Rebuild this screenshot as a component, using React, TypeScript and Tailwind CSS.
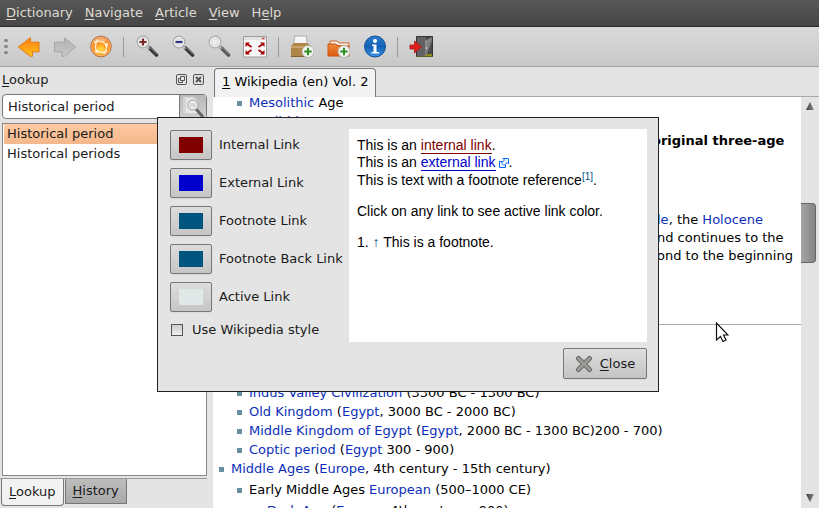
import React from "react";

type Children = { children: React.ReactNode };

const Key = ({ children }: Children) => (
  <span className="underline decoration-1 underline-offset-2">{children}</span>
);

const MenuItem = ({ children }: Children) => (
  <button type="button" className="whitespace-nowrap text-[#dfdbd2]">
    {children}
  </button>
);

const ToolButton = ({ label, children }: Children & { label: string }) => (
  <button type="button" aria-label={label} className="flex h-6 w-6 shrink-0 items-center justify-center">
    <svg width="24" height="24" viewBox="0 0 24 24">
      {children}
    </svg>
  </button>
);

const ToolSeparator = () => (
  <div className="-mx-px h-5 w-px shrink-0 bg-[#9a9a9a]" />
);

const Lens = ({ handle = "#333", children }: { handle?: string; children?: React.ReactNode }) => (
  <>
    <path d="M14.500 13l7 7" stroke={handle} strokeWidth="3.6" strokeLinecap="round" />
    <path d="M15.500 12.800l6.500 6.500" stroke="#8c8c8c" strokeWidth="1" />
    <path d="M12 11l2.600 2.600" stroke="#b4b4b4" strokeWidth="2" />
    <circle cx="8" cy="7" r="5.800" fill="url(#glass)" stroke="#a8a8a6" strokeWidth="1.200" />
    <circle cx="8" cy="7" r="4.700" fill="none" stroke="#f4f4f4" strokeWidth="1" />
    {children}
  </>
);

const PlusBadge = ({ x }: { x: number }) => (
  <g>
    <circle cx={x} cy="16.5" r="6" fill="#f2f2ef" stroke="#aaa9a0" strokeWidth="0.8" />
    <path d={`M${x} 12.8v7.4M${x - 3.7} 16.5h7.4`} stroke="#2b8f20" strokeWidth="2" />
  </g>
);

const Gradients = () => (
  <svg width="0" height="0" className="absolute" aria-hidden="true">
    <defs>
      <linearGradient id="orange" x1="0" y1="0" x2="0" y2="1">
        <stop offset="0" stopColor="#ff7a14" />
        <stop offset="1" stopColor="#ffc21a" />
      </linearGradient>
      <linearGradient id="grey" x1="0" y1="0" x2="0" y2="1">
        <stop offset="0" stopColor="#b2b2b2" />
        <stop offset="1" stopColor="#c8c8c8" />
      </linearGradient>
      <radialGradient id="globe" cx="0.5" cy="0.65" r="0.6">
        <stop offset="0" stopColor="#ffe04a" />
        <stop offset="0.5" stopColor="#ff9a1e" />
        <stop offset="1" stopColor="#f27a2c" />
      </radialGradient>
      <radialGradient id="glass">
        <stop offset="0" stopColor="#f4f4f4" />
        <stop offset="1" stopColor="#d2d4d2" />
      </radialGradient>
      <linearGradient id="blue" x1="0" y1="0" x2="0" y2="1">
        <stop offset="0" stopColor="#2d7fd0" />
        <stop offset="0.5" stopColor="#1260b4" />
        <stop offset="1" stopColor="#3c94e4" />
      </linearGradient>
      <linearGradient id="folder" x1="0" y1="0" x2="0" y2="1">
        <stop offset="0" stopColor="#f0893c" />
        <stop offset="1" stopColor="#dc5a10" />
      </linearGradient>
      <linearGradient id="door" x1="0" y1="0" x2="1" y2="1">
        <stop offset="0" stopColor="#9a9a9a" />
        <stop offset="1" stopColor="#5c5c5c" />
      </linearGradient>
      <linearGradient id="triangle" x1="0" y1="0" x2="1" y2="0">
        <stop offset="0" stopColor="#3c3c3c" />
        <stop offset="1" stopColor="#8c8c8c" />
      </linearGradient>
    </defs>
  </svg>
);

const Toolbar = () => (
  <div className="flex h-10 shrink-0 items-center gap-3 border-b border-[#a3a3a3] bg-linear-to-b from-[#dadada] to-[#c8c8c8] pl-1">
    <div className="-mr-3 flex w-3 flex-col gap-[3px]">
      <i className="h-[3px] w-[4px] rounded-full bg-[#858585]" />
      <i className="h-[3px] w-[4px] rounded-full bg-[#858585]" />
      <i className="h-[3px] w-[4px] rounded-full bg-[#858585]" />
    </div>
    <ToolButton label="Back">
      <path d="M2.3 12L14.5 2.7V7.2H23V16.8H16.5V21.3H14.2z" fill="url(#orange)" stroke="#e07a10" strokeWidth="1" strokeLinejoin="round" />
    </ToolButton>
    <ToolButton label="Forward">
      <path d="M23.5 12L12.5 2.7V7.2H2.5V16.8H10V21.3H12.5z" fill="url(#grey)" stroke="#a6a6a6" strokeWidth="1" strokeLinejoin="round" />
    </ToolButton>
    <ToolButton label="Random article">
      <circle cx="13" cy="11.5" r="10.3" fill="url(#globe)" stroke="#b06a3c" strokeWidth="1" />
      <circle cx="13" cy="11.5" r="9.300" fill="none" stroke="#ffc890" strokeWidth="0.8" />
      <path d="M6 7.500c5-2 10-1 13 3M10 4.500c-3 4-3 9-1 13M19 8c0 5-1 8-3 11M7 16c4 2 8 2 12 0" fill="none" stroke="#ffe8cc" strokeWidth="1.400" />
      <path d="M6 6c3-3 8-4 13-1l-4 3c-3-1-6-1-9 1z" fill="#fff" fillOpacity="0.35" />
      <circle cx="9" cy="16" r="1.500" fill="#fff3d8" />
      <circle cx="18.500" cy="10" r="1.500" fill="#fff3d8" />
    </ToolButton>
    <ToolSeparator />
    <ToolButton label="Zoom in">
      <Lens><path d="M8 3.500v7M4.500 7h7" stroke="#7c2626" strokeWidth="2" /></Lens>
    </ToolButton>
    <ToolButton label="Zoom out">
      <Lens><path d="M4.500 7h7" stroke="#35358c" strokeWidth="2.200" /></Lens>
    </ToolButton>
    <ToolButton label="Normal size"><Lens handle="#555" /></ToolButton>
    <ToolButton label="Full screen">
      <path d="M.5 1.5h23v20.500h-23z" fill="#f8f8f8" stroke="#9b9b9b" />
      <path d="M1 2h22v3H1z" fill="#e2e2e2" />
      <path d="M19 3.500h2.500" stroke="#d33" strokeWidth="1.5" />
      <g fill="#a40000" stroke="#a40000" strokeWidth="1.800">
        <path d="M4 9l4.500 3M20 9l-4.500 3M4 18l4.500-3M20 18l-4.500-3" />
        <path d="M2.500 7.500H7l-4.500 4.500zM21.500 7.500H17l4.500 4.500zM2.500 19.500H7l-4.500-4.500zM21.500 19.500H17l4.500-4.500z" stroke="none" />
      </g>
    </ToolButton>
    <ToolSeparator />
    <ToolButton label="Add dictionaries">
      <path d="M4.500 1h12l1 11h-14z" fill="#f6f6f6" stroke="#aaa" />
      <path d="M1 11l3-3h13l4 3v11H1z" fill="#b08648" />
      <path d="M1 11h20v2H1z" fill="#caa368" />
      <path d="M1 21h20v1H1z" fill="#80602e" />
      <PlusBadge x={18} />
    </ToolButton>
    <ToolButton label="Add dictionary directory">
      <path d="M4 9V6h7l2 2h10v4z" fill="#f5f5f5" stroke="#cf651d" strokeWidth="1" />
      <path d="M2 21V9h8l2 2h11v10z" fill="url(#folder)" stroke="#c85512" strokeWidth="1" />
      <PlusBadge x={18} />
    </ToolButton>
    <ToolButton label="Dictionary info">
      <circle cx="13" cy="11.500" r="10.500" fill="url(#blue)" stroke="#0e4d97" strokeWidth="1" />
      <circle cx="13" cy="6" r="2" fill="#fff" />
      <path d="M10 9.500h4.500v7.500H17v1.500H9.500V17H11.500v-6H10z" fill="#fff" />
    </ToolButton>
    <ToolSeparator />
    <ToolButton label="Quit">
      <path d="M7.500 1.500h16v20h-16z" fill="#4a4a4a" stroke="#333" />
      <path d="M8 19h15v2.500H8z" fill="#8d8c1e" />
      <path d="M8 2h9v16l-2 3H8z" fill="#626262" />
      <path d="M23 2v4l-5 13-2 2V6z" fill="url(#door)" />
      <path d="M17.500 12v2" stroke="#ddd" />
      <path d="M1 10h4.500V6l7 6-7 6v-4H1z" fill="#df2020" stroke="#b01010" strokeWidth="0.8" />
    </ToolButton>
  </div>
);

const PanelButton = ({ label, d, stroke = 1 }: { label: string; d: string; stroke?: number }) => (
  <button type="button" aria-label={label} className="text-[#555]">
    <svg width="11" height="11" viewBox="0 0 11 11" fill="none" stroke="currentColor">
      <rect x="0.5" y="0.5" width="10" height="10" rx="1.5" />
      <path d={d} strokeWidth={stroke} />
    </svg>
  </button>
);

const LookupPanel = () => (
  <aside className="flex w-[207px] shrink-0 flex-col">
    <div className="flex h-[25px] items-center pl-0.5 pr-[3px]">
      <span className="flex-1"><Key>L</Key>ookup</span>
      <div className="flex gap-1.5">
        <PanelButton label="Float" d="M4.500 2.500h4v4h-4zM6.500 6.500v2h-4v-4h2" />
        <PanelButton label="Close panel" d="M3 3l5 5M8 3l-5 5" stroke={2} />
      </div>
    </div>
    <div className="mb-1 ml-0.5 mt-0.5 flex h-[25px] rounded-sm border border-[#777] bg-white">
      <input aria-label="Look up" defaultValue="Historical period" className="min-w-0 flex-1 bg-transparent pl-[5px] outline-none" />
      <button type="button" aria-label="Search" className="flex w-[27px] items-center justify-center border-l border-[#777] bg-linear-to-b from-[#b8b8b8] to-[#d0d0d0]">
        <svg width="24" height="22" viewBox="0 0 24 22">
          <path d="M2 1h11l4 4v13H2z" fill="#e6e6e6" stroke="#c2c2c2" />
          <path d="M4 2v15" stroke="#c5c5c5" />
          <path d="M15 13l7 8" stroke="#666" strokeWidth="3" />
          <circle cx="12" cy="9" r="5" fill="#eee" stroke="#b4b4b4" strokeWidth="1.300" />
          <path d="M9 8h6M9 10h6" stroke="#c4c4c4" />
        </svg>
      </button>
    </div>
    <ul className="ml-0.5 flex-1 border border-[#888] bg-white px-px leading-5">
      <li className="bg-linear-to-b from-[#ffcaa2] to-[#f3b78b] pl-[3px]">Historical period</li>
      <li className="pl-[3px]">Historical periods</li>
    </ul>
    <div className="mt-0.5 flex h-[30px] items-start border-t border-[#999] pl-px">
      <button type="button" className="h-[27px] rounded-b-sm border border-t-0 border-[#777] bg-[#f2f2f2] px-[7px]"><Key>L</Key>ookup</button>
      <button type="button" className="ml-px h-[25px] border border-t-0 border-[#777] bg-linear-to-b from-[#bdbdbd] to-[#a9a9a9] px-[7px]"><Key>H</Key>istory</button>
    </div>
  </aside>
);

const A = ({ children }: Children) => (
  <a href="#article" className="text-[#0b2fb8]">{children}</a>
);

const Item = ({ depth = 1, children }: Children & { depth?: 0 | 1 | 2 }) => (
  <li className={`flex items-center gap-[7px] whitespace-nowrap ${depth === 0 ? "pl-1.5" : depth === 1 ? "pl-6" : "pl-[42px]"}`}>
    <i className="mt-0.5 h-[5px] w-[5px] shrink-0 bg-[#678f9f]" />
    <span>{children}</span>
  </li>
);

const Article = () => (
  <article className="min-w-0 flex-1 overflow-hidden bg-white text-black">
    <ul className="-mt-1 leading-[19px]">
      <Item><A>Mesolithic</A> Age</Item>
      <Item><A>Neolithic</A></Item>
    </ul>
    <h3 className="pl-[439px] text-[13px] font-bold leading-[19px] whitespace-nowrap">original three-age</h3>
    <p className="pl-[444px] pt-[61px] leading-[18px] whitespace-nowrap">
      <A>le</A>, the <A>Holocene</A><br />
      nd continues to the<br />
      ond to the beginning
    </p>
    <hr className="mb-[58px] mt-[59px] border-[#aaa]" />
    <ul className="leading-[19px]">
      <Item><A>Indus Valley Civilization</A> (3300 BC - 1300 BC)</Item>
      <Item><A>Old Kingdom</A> (<A>Egypt</A>, 3000 BC - 2000 BC)</Item>
      <Item><A>Middle Kingdom of Egypt</A> (<A>Egypt</A>, 2000 BC - 1300 BC)200 - 700)</Item>
      <Item><A>Coptic period</A> (<A>Egypt</A> 300 - 900)</Item>
      <Item depth={0}><A>Middle Ages</A> (<A>Europe</A>, 4th century - 15th century)</Item>
    </ul>
    <ul className="pt-0.5 leading-[19px]">
      <Item>Early Middle Ages <A>European</A> (500–1000 CE)</Item>
    </ul>
    <ul className="pt-0.5 leading-[19px]">
      <Item depth={2}><A>Dark Age</A> (<A>Europe</A>, 4th century - 900)</Item>
    </ul>
  </article>
);

const ScrollBar = () => (
  <div className="flex w-[18px] shrink-0 flex-col items-center bg-[#e4e4e4] pb-1.5 pt-[5px]">
    <svg width="8" height="8" viewBox="0 0 8 8"><path d="M4 0l4 8H0z" fill="url(#triangle)" /></svg>
    <div className="mt-[93px] h-[60px] w-[15px] self-start rounded-r-sm border border-l-0 border-[#666] bg-linear-to-r from-[#a5a5a5] to-[#858585]" />
    <svg className="mt-auto" width="8" height="8" viewBox="0 0 8 8"><path d="M4 8L0 0h8z" fill="url(#triangle)" /></svg>
  </div>
);

const Swatch = ({ id, label, color }: { id: string; label: string; color: string }) => (
  <div className="flex items-center gap-[7px]">
    <button type="button" id={id} className="flex h-[30px] w-[42px] items-center justify-center rounded-xs border border-[#777] bg-linear-to-b from-[#dddddd] to-[#c5c5c5] shadow-xs">
      <span className={`h-4 w-6 ${color}`} />
    </button>
    <label htmlFor={id} className="whitespace-nowrap">{label}</label>
  </div>
);

const StyleDialog = () => (
  <div className="fixed inset-0 flex items-center justify-center pr-[3px] pt-px">
    <div role="dialog" aria-label="Article appearance" className="w-[502px] border border-[#222] bg-[#e4e4e4] px-[11px] pb-3 pt-[11px]">
      <div className="flex">
        <div className="w-[180px] shrink-0 pl-px">
          <div className="flex flex-col gap-2 pt-px">
            <Swatch id="internal" label="Internal Link" color="bg-[#800000]" />
            <Swatch id="external" label="External Link" color="bg-[#0000cc]" />
            <Swatch id="footnote" label="Footnote Link" color="bg-[#00557f]" />
            <Swatch id="footnote-back" label="Footnote Back Link" color="bg-[#00557f]" />
            <Swatch id="active" label="Active Link" color="bg-[#e0e8e8]" />
          </div>
          <label className="mt-2 flex items-center gap-[9px] whitespace-nowrap pl-px">
            <input type="checkbox" className="h-3 w-3 appearance-none border border-[#555] bg-linear-to-b from-[#cccccc] to-[#eeeeee]" />
            Use Wikipedia style
          </label>
        </div>
        <div className="h-[213px] flex-1 bg-white px-2 pt-2 font-['Liberation_Sans',Arial,sans-serif] text-[14px] leading-[17px] text-black">
          <p>This is an <a href="#internal" className="border-b border-[#800000] text-[#800000]">internal link</a>.</p>
          <p>
            This is an <a href="#external" className="border-b border-[#0000cc] text-[#0000cc]">external link</a>
            <svg className="ml-[3px] inline-block align-[-1px]" width="10" height="10" viewBox="0 0 10 10" fill="none" stroke="#0066ee">
              <path d="M3.500 3.500h-3v6h6v-3" />
              <path d="M4 .500h5.500V6L8 4.500 5 7.500 2.500 5 5.500 2z" fill="#fff" />
            </svg>.
          </p>
          <p className="leading-[18px]">This is text with a footnote reference<sup className="text-[10px] leading-none"><a href="#note" className="text-[#00557f]">[1]</a></sup>.</p>
          <p className="mt-3.5">Click on any link to see active link color.</p>
          <p className="mt-3.5">1. <a href="#reference" className="text-[#00557f]">↑</a> This is a footnote.</p>
        </div>
      </div>
      <div className="mt-1.5 flex justify-end">
        <button type="button" className="flex h-[31px] w-[84px] items-center justify-center gap-[7px] rounded-xs border border-[#777] bg-linear-to-b from-[#dedede] to-[#c4c4c4] shadow-xs">
          <svg width="18" height="18" viewBox="0 0 18 18" strokeLinecap="round">
            <path d="M3.500 3.500l11 11M14.500 3.500l-11 11" stroke="#6c6e6a" strokeWidth="5" />
            <path d="M3.500 3.500l11 11M14.500 3.500l-11 11" stroke="#9a9c98" strokeWidth="3" />
          </svg>
          <span><Key>C</Key>lose</span>
        </button>
      </div>
    </div>
  </div>
);

export default function App() {
  return (
    <div className="flex h-screen flex-col overflow-hidden bg-[#e4e4e4] font-['DejaVu_Sans',Verdana,sans-serif] text-[13px] text-[#1a1a1a]">
      <Gradients />
      <nav className="flex h-[27px] shrink-0 items-center gap-3 border-b border-[#2b2b2b] bg-linear-to-b from-[#575757] to-[#464646] pl-1.5">
        <MenuItem><Key>D</Key>ictionary</MenuItem>
        <MenuItem><Key>N</Key>avigate</MenuItem>
        <MenuItem><Key>A</Key>rticle</MenuItem>
        <MenuItem><Key>V</Key>iew</MenuItem>
        <MenuItem>H<Key>e</Key>lp</MenuItem>
      </nav>
      <Toolbar />
      <main className="flex min-h-0 flex-1 gap-1.5">
        <LookupPanel />
        <section className="flex min-w-0 flex-1 flex-col pt-px">
          <div className="flex h-[29px] shrink-0 pl-px">
            <button type="button" className="rounded-t-sm border border-b-0 border-[#777] bg-[#f2f2f2] px-[7px] pb-0.5 text-black whitespace-nowrap">
              <Key>1</Key> Wikipedia (en) Vol. 2
            </button>
            <div className="flex-1 border-b border-[#aaa]" />
          </div>
          <div className="flex min-h-0 flex-1">
            <Article />
            <ScrollBar />
          </div>
        </section>
      </main>
      <StyleDialog />
      <svg className="fixed left-[715px] top-[322px]" width="14" height="21" viewBox="0 0 14 21">
        <path d="M1.500 1v17l4-3.500 2.500 5 3-1.500-2.500-5h4.500z" fill="#fff" stroke="#111" strokeWidth="1.200" />
      </svg>
    </div>
  );
}
